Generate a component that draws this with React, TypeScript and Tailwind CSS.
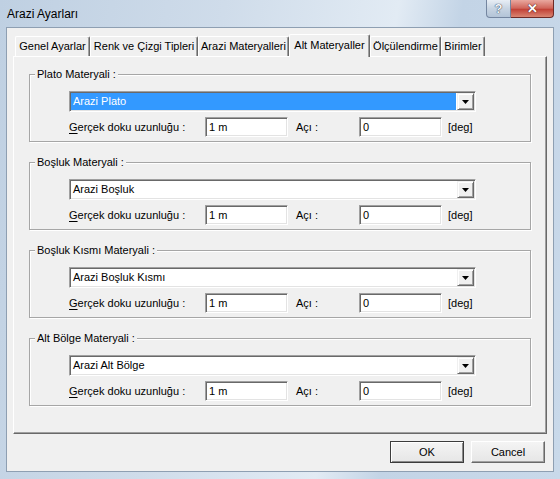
const font = "font-['Liberation_Sans',Arial,sans-serif]"

const tabs = [
  { label: 'Genel Ayarlar', w: 'w-[75px]' },
  { label: 'Renk ve Çizgi Tipleri', w: 'w-[108px]' },
  { label: 'Arazi Materyalleri', w: 'w-[91px]' },
  { label: 'Alt Materyaller', w: 'w-[81px]', active: true },
  { label: 'Ölçülendirme', w: 'w-[71px]' },
  { label: 'Birimler', w: 'w-[44px]' },
]

const groups = [
  { title: 'Plato Materyali :', value: 'Arazi Plato', selected: true },
  { title: 'Boşluk Materyali :', value: 'Arazi Boşluk' },
  { title: 'Boşluk Kısmı Materyali :', value: 'Arazi Boşluk Kısmı' },
  { title: 'Alt Bölge Materyali :', value: 'Arazi Alt Bölge' },
]

function Combo({ value, selected }: { value: string; selected?: boolean }) {
  return (
    <div className="flex h-[21px] w-[407px] border border-t-[#a0a0a0] border-l-[#a0a0a0] border-r-white border-b-white bg-white p-[1px] shadow-[inset_1px_1px_0_#696969,inset_-1px_-1px_0_#e3e3e3]">
      <div
        className={`flex flex-1 items-center pl-[2px] ${
          selected ? 'bg-[#3399ff] text-white' : 'bg-white text-black'
        }`}
      >
        {value}
      </div>
      <div className="ml-[1px] flex w-[17px] items-center justify-center border border-t-[#f0f0f0] border-l-[#f0f0f0] border-r-[#696969] border-b-[#696969] bg-[#f0f0f0] shadow-[inset_1px_1px_0_#fff,inset_-1px_-1px_0_#a0a0a0]">
        <svg width="7" height="4" viewBox="0 0 7 4">
          <polygon points="0,0 7,0 3.5,4" fill="#000" />
        </svg>
      </div>
    </div>
  )
}

function TextBox({ value }: { value: string }) {
  return (
    <div className="flex h-[20px] w-[83px] shrink-0 items-center border border-t-[#a0a0a0] border-l-[#a0a0a0] border-r-white border-b-white bg-white pl-[3px] shadow-[inset_1px_1px_0_#696969,inset_-1px_-1px_0_#e3e3e3]">
      {value}
    </div>
  )
}

function Group({ title, value, selected }: { title: string; value: string; selected?: boolean }) {
  return (
    <div className="w-[502px] border border-[#a6a6a6] shadow-[inset_1px_1px_0_#fff,1px_1px_0_#fff]">
      <div className="-mt-[7px] ml-[5px] flex h-[13px] w-fit items-center bg-[#f0f0f0] px-[2px]">{title}</div>
      <div className="ml-[39px] mt-[10px]">
        <Combo value={value} selected={selected} />
      </div>
      <div className="ml-[39px] mt-[5px] mb-[4px] flex h-[20px] items-center">
        <div className="w-[136px] shrink-0">
          <span className="underline underline-offset-[2px]">G</span>erçek doku uzunluğu :
        </div>
        <TextBox value="1 m" />
        <div className="w-[71px] shrink-0 pl-[8px]">Açı :</div>
        <TextBox value="0" />
        <div className="ml-[6px]">[deg]</div>
      </div>
    </div>
  )
}

function WinButton({ label, isDefault }: { label: string; isDefault?: boolean }) {
  return (
    <div
      className={`flex h-[22px] w-[74px] items-center justify-center bg-[linear-gradient(#f4f4f4,#e6e6e6)] ${
        isDefault
          ? 'border border-[#3c3c3c] shadow-[inset_1px_1px_0_#fff,inset_-1px_-1px_0_#8a8a8a]'
          : 'border border-t-white border-l-white border-r-[#696969] border-b-[#696969] shadow-[inset_-1px_-1px_0_#a0a0a0]'
      }`}
    >
      {label}
    </div>
  )
}

export default function App() {
  return (
    <div
      className={`flex h-[479px] w-[560px] flex-col bg-[linear-gradient(100deg,#bfd0e2_0%,#cfdcea_35%,#e2ebf4_62%,#c3d4e6_72%,#c9d9ea_100%)] px-[6px] text-[11px] text-black ${font}`}
    >
      <div className="flex h-[27px] shrink-0 items-start justify-between">
        <div className="pl-[1px] pt-[7px] text-[12px] leading-[15px] text-black">Arazi Ayarları</div>
        <div className="flex">
          <div className="flex h-[18px] w-[25px] items-center justify-center rounded-bl-[4px] border border-t-0 border-[#7486a0] bg-[linear-gradient(#e8eef5,#c7d4e2_50%,#b3c4d7)] text-[13px] font-bold leading-none text-[#f4f7fa] [text-shadow:0_0_1px_#2b3b52,0_0_1px_#2b3b52]">
            ?
          </div>
          <div className="flex h-[18px] w-[43px] items-center justify-center rounded-br-[4px] border border-t-0 border-l-0 border-[#6e2a26] bg-[linear-gradient(#e9a89f,#d0655a_48%,#c24237_55%,#d98572)] text-[13px] font-bold leading-none text-white [text-shadow:0_0_1px_#4a1410,0_0_1px_#4a1410]">
            ✕
          </div>
        </div>
      </div>

      <div className="flex h-[445px] shrink-0 flex-col border border-[#8e9fb2] bg-[#f0f0f0] px-[6px] pt-[6px]">
        <div className="flex h-[22px] items-end pl-[2px]">
          {tabs.map((t) =>
            t.active ? (
              <div
                key={t.label}
                className={`relative z-10 -mb-[1px] flex h-[23px] items-center justify-center rounded-t-[2px] border-t border-l border-white border-r border-r-[#696969] bg-[#f0f0f0] pb-[2px] shadow-[inset_-1px_0_0_#a0a0a0] ${t.w}`}
              >
                {t.label}
              </div>
            ) : (
              <div
                key={t.label}
                className={`flex h-[20px] items-center justify-center rounded-t-[2px] border-t border-l border-white border-r border-r-[#696969] bg-[#f0f0f0] shadow-[inset_-1px_0_0_#a0a0a0] ${t.w}`}
              >
                {t.label}
              </div>
            )
          )}
        </div>

        <div className="flex h-[378px] flex-col gap-[20px] border border-t-white border-l-white border-r-[#696969] border-b-[#696969] px-[15px] pt-[17px] shadow-[inset_-1px_-1px_0_#a0a0a0]">
          {groups.map((g) => (
            <Group key={g.title} title={g.title} value={g.value} selected={g.selected} />
          ))}
        </div>

        <div className="mt-[7px] flex justify-end gap-[7px] pr-[2px]">
          <WinButton label="OK" isDefault />
          <WinButton label="Cancel" />
        </div>
      </div>
    </div>
  )
}
